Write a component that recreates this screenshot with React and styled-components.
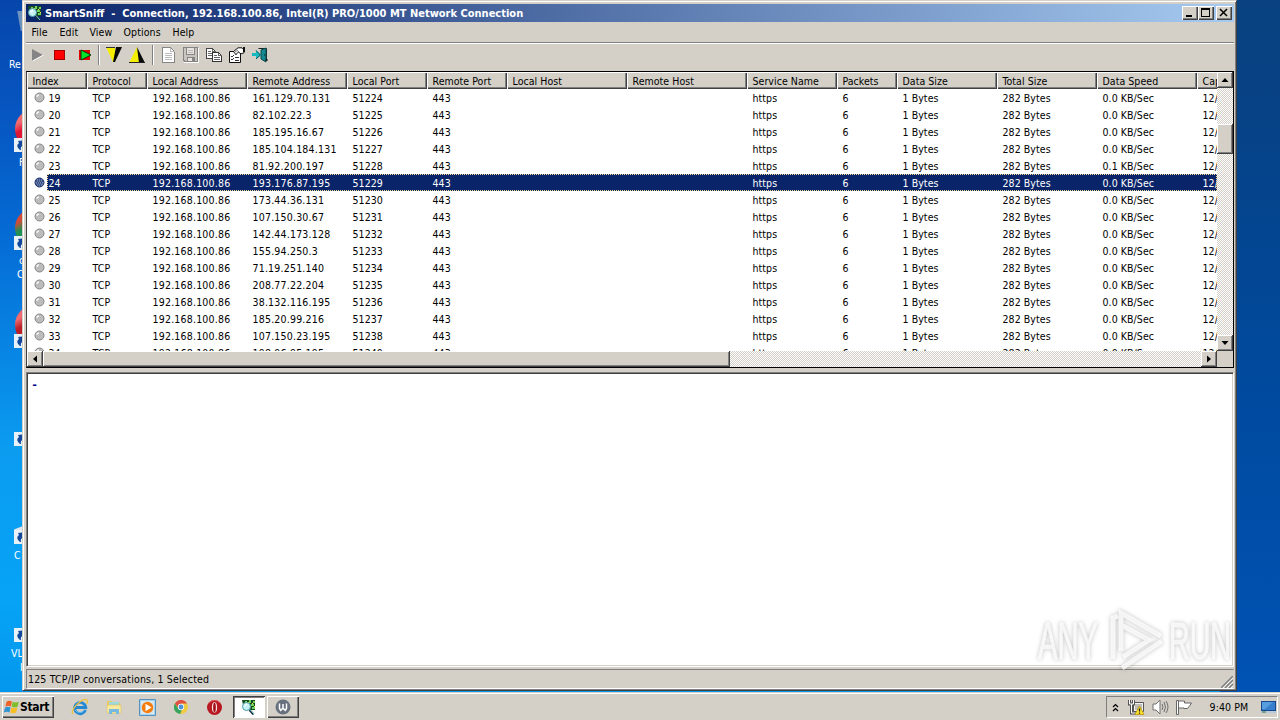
import React from 'react'
import styled, { createGlobalStyle } from 'styled-components'

const columns = [
  { title: 'Index', width: 60 },
  { title: 'Protocol', width: 60 },
  { title: 'Local Address', width: 100 },
  { title: 'Remote Address', width: 100 },
  { title: 'Local Port', width: 80 },
  { title: 'Remote Port', width: 80 },
  { title: 'Local Host', width: 120 },
  { title: 'Remote Host', width: 120 },
  { title: 'Service Name', width: 90 },
  { title: 'Packets', width: 60 },
  { title: 'Data Size', width: 100 },
  { title: 'Total Size', width: 100 },
  { title: 'Data Speed', width: 100 },
  { title: 'Cap', width: 120 },
]

const remotes = [
  '161.129.70.131', '82.102.22.3', '185.195.16.67', '185.104.184.131', '81.92.200.197',
  '193.176.87.195', '173.44.36.131', '107.150.30.67', '142.44.173.128', '155.94.250.3',
  '71.19.251.140', '208.77.22.204', '38.132.116.195', '185.20.99.216', '107.150.23.195',
  '198.96.95.195',
]

const rows = remotes.map((remote, i) => [
  String(19 + i), 'TCP', '192.168.100.86', remote, String(i === 15 ? 51240 : 51224 + i), '443', '', '',
  'https', '6', '1 Bytes', '282 Bytes', i === 4 ? '0.1 KB/Sec' : '0.0 KB/Sec', '12/',
])

const SniffIcon = () => (
  <svg width="16" height="16" viewBox="0 0 16 16">
    <path d="M1 1h13v10H9l-3-2-4-3z" fill="#174b22" />
    <path d="M4 2h2v2H4zM8 1h2v3H8zM12 2h2v2h-2zM10 5h3v2h-3zM11 8h3v2h-3z" fill="#6fd35e" />
    <path d="M7 3h1v1H7zM11 4h1v1h-1zM13 7h1v1h-1z" fill="#ffe74a" />
    <circle cx="5.5" cy="7.5" r="4" fill="#c6f3f7" stroke="#4a9da5" />
    <path d="M3.5 7 6 5" stroke="#fff" strokeWidth="1.3" />
    <path d="m8.5 11 4 4.5" stroke="#102c38" strokeWidth="2" />
    <path d="m9 10.5 4 4.5" stroke="#8be1e8" strokeWidth=".9" />
  </svg>
)

const PlayIcon = () => (
  <svg width="16" height="16"><path d="M3 2v12l11-6z" fill="#858585" /><path d="m3.5 14 11-6" stroke="#fff" /></svg>
)

const StopIcon = () => (
  <svg width="16" height="16" shapeRendering="crispEdges">
    <path d="M2 3h11v10H2z" fill="#a00000" /><path d="M3 4h9v8H3z" fill="#f00" />
  </svg>
)

const RestartIcon = () => (
  <svg width="16" height="16">
    <path d="M4 3h11v10H4z" fill="#e00000" />
    <path d="M6 3v10l10-5z" fill="#00e52a" stroke="#063a08" />
  </svg>
)

const DownFilterIcon = () => (
  <svg width="16" height="16">
    <path d="M0 0h9v15H7z" fill="#f6ee00" /><path d="M16 0h-6l-3 15h2z" fill="#080808" />
    <path d="M0 .5h9" stroke="#333" />
  </svg>
)

const UpFilterIcon = () => (
  <svg width="16" height="16">
    <path d="M8 0 0 16h11z" fill="#f6ee00" /><path d="M8 0l2 16h6z" fill="#080808" />
    <path d="M0 15.5h16" stroke="#222" />
  </svg>
)

const DocIcon = () => (
  <svg width="16" height="16" fill="none" shapeRendering="crispEdges">
    <path d="M2.5.5h8l4 4v11h-12z" fill="#fff" stroke="#858585" />
    <path d="M10.5.5v4h4M5 6.5h7M5 8.5h7M5 10.5h7M5 12.5h7" stroke="#bbb" />
  </svg>
)

const SaveIcon = () => (
  <svg width="16" height="16" fill="none" shapeRendering="crispEdges">
    <path d="M.5.5h14v14H2L.5 13z" fill="#c8c5be" stroke="#828282" />
    <path d="M3.5.5h8v7h-8zM4.5 10.5h7v4h-7z" fill="#e7e4df" stroke="#858585" />
    <path d="M5 3.5h5M5 5.5h5" stroke="#bbb" /><path d="M9 11h2v3H9z" fill="#888" />
    <path d="M1 15.5h14.5V1" stroke="#fff" />
  </svg>
)

const CopyIcon = () => (
  <svg width="16" height="16" fill="none" shapeRendering="crispEdges">
    <path d="M.5 1.5h6l3 3v7h-9z" fill="#fff" stroke="#444" />
    <path d="M6.5 1.5v3h3M2 4.5h3M2 6.5h5M2 8.5h5" stroke="#666" />
    <path d="M6.5 5.5h6l3 3v6h-9z" fill="#fff" stroke="#333" />
    <path d="M12.5 5.5v3h3M8 8.5h3M8 10.5h6M8 12.5h6" stroke="#666" />
  </svg>
)

const PropertiesIcon = () => (
  <svg width="16" height="16" fill="none">
    <path d="M.5 4.5h11v11H.5z" fill="#fff" stroke="#111" />
    <path d="m2 9 1 1 2-2M2 12l1 1 2-2M6 10.5h4M6 13.5h4" stroke="#333" />
    <path d="M4.5 4.5 9 .8h4l2 2v3l-3 1-3-2-2 3z" fill="#fff" stroke="#111" />
    <path d="m6 5 3-2M8 6l2-2" stroke="#777" /><path d="M14 0h2v5h-2z" fill="#111" />
  </svg>
)

const ExitIcon = () => (
  <svg width="16" height="16">
    <path d="M6.5 1.5h8v12" fill="none" stroke="#222" />
    <path d="m9 3 5-2v14l-5-3z" fill="#168a91" stroke="#07484c" />
    <path d="M0 6h4V3l5 5-5 4V9H0z" fill="#16b9bd" />
    <path d="M4 3.5 8.5 8 4 12" fill="none" stroke="#075a60" />
    <path d="M13 13h3M12 8h1" stroke="#111" />
  </svg>
)

const Bullet = ({ selected }) => (
  <svg width="11" height="11" viewBox="0 0 11 11">
    <circle cx="5.5" cy="5.5" r="4.5" fill={selected ? '#697ca5' : '#bcbcbc'} stroke={selected ? '#142e6c' : '#858585'} />
    {selected
      ? <path d="M2 4h1m1 0h1m1 0h1m1 0h1M3 6h1m1 0h1m1 0h1M2 8h1m1 0h1m1 0h1M4 2h1m1 0h1" stroke="#0a246a" />
      : <path d="M3 5q0-2 2-2" fill="none" stroke="#f5f5f5" strokeWidth="1.3" />}
  </svg>
)

const Arrow = ({ turn = 0 }) => (
  <svg width="8" height="8" viewBox="0 0 8 8">
    <path d="M4 2 7.5 6h-7z" transform={`rotate(${turn} 4 4)`} />
  </svg>
)

const FlagLogo = () => (
  <svg width="16" height="16" viewBox="0 0 16 16">
    <path d="M2.6 2.8Q5 .8 8 2.5L6.8 7.4Q4 6 1.3 7.7z" fill="#ef6025" />
    <path d="M8.8 2.8q3 1.5 6-.1l-1.2 5q-3 1.6-6-.1z" fill="#7fbd2b" />
    <path d="M1.1 8.6q2.7-1.7 5.5-.2l-1.2 5q-3-1.4-5.6.2z" fill="#3295d3" />
    <path d="M7.4 8.5q3 1.5 6 .1l-1.2 5q-3 1.5-6-.1z" fill="#f7bd24" />
  </svg>
)

const IeIcon = () => (
  <svg width="18" height="18" viewBox="0 0 18 18" fill="none">
    <path d="M14.5 12A5.6 5.6 0 1 1 14.8 9.5H5" stroke="#2788d2" strokeWidth="2.8" />
    <path d="M13.5 12A5.8 5.8 0 0 1 4 12" stroke="#62c2f1" />
    <path d="M2 16C-2 13 12-2 16 2c1 1 .4 2.5-.3 3.8" stroke="#edc13a" strokeWidth="1.3" />
  </svg>
)

const FolderIcon = () => (
  <svg width="18" height="18" viewBox="0 0 18 18">
    <path d="M2 3h5l1 2h7v10H2z" fill="#e8c85f" /><path d="M4 4h10v5H4z" fill="#9dd8db" />
    <path d="M2 7h14v8H2z" fill="#fae99c" stroke="#d8bf61" strokeWidth=".6" />
    <path d="M4 16v-5h10v5h-3v-2H7v2z" fill="#77b9df" />
  </svg>
)

const MediaIcon = () => (
  <svg width="17" height="17" viewBox="0 0 17 17">
    <path d="M.5.5h16v16H.5z" fill="#a9d2ec" stroke="#5292c3" />
    <path d="M2 2h13v13H2z" fill="#d7e8ef" />
    <circle cx="8.5" cy="8.5" r="5.8" fill="#f47d12" /><path d="M6.5 4.8v7.4l6-3.7z" fill="#fff" />
  </svg>
)

const ChromeIcon = () => (
  <svg width="14" height="14" viewBox="0 0 16 16">
    <circle cx="8" cy="8" r="8" fill="#efcb42" />
    <path d="M1 4a8 8 0 0 1 14 0H8L5 9z" fill="#df4f44" />
    <path d="m1 4 4 6 4 1-2 5A8 8 0 0 1 1 4z" fill="#36a35e" />
    <circle cx="8" cy="8" r="3.6" fill="#fff" /><circle cx="8" cy="8" r="2.8" fill="#4b91db" />
  </svg>
)

const OperaIcon = () => (
  <svg width="15" height="15" viewBox="0 0 16 16">
    <circle cx="8" cy="8" r="8" fill="#b71822" /><path d="M2 3q6-5 12 0" stroke="#e96061" fill="none" />
    <ellipse cx="8" cy="8" rx="2.8" ry="5.5" fill="#f6dddd" />
    <ellipse cx="8" cy="8" rx="1.4" ry="5.2" fill="#a00e18" />
  </svg>
)

const RoundAppIcon = () => (
  <svg width="16" height="16" viewBox="0 0 16 16">
    <circle cx="8" cy="8" r="7.5" fill="#68717d" />
    <path d="M4.5 4.5v5l1.2 1.8L8 9.2l2.3 2.1 1.2-1.8v-5M8 5v4" fill="none" stroke="#fff" strokeWidth="1.5" />
  </svg>
)

const NetworkIcon = () => (
  <svg width="17" height="17" viewBox="0 0 17 17">
    <path d="M5.5 3.5h10v9h-10z" fill="#f4f3ef" stroke="#555" />
    <path d="M7 5h7v6H7z" fill="#c0bdb6" />
    <path d="M1.5 1v4h4V1M3.5 5v9H8" fill="none" stroke="#555" strokeWidth="3" />
    <path d="M1.5 1v4h4V1M3.5 5v9H8" fill="none" stroke="#fff" />
    <path d="m11.5 7 4.5 8.5H7z" fill="#ffe329" stroke="#b18b00" strokeWidth=".7" />
    <path d="M11.5 9.5v3m0 1v1.2" stroke="#222" strokeWidth="1.3" />
  </svg>
)

const SoundIcon = () => (
  <svg width="17" height="16" viewBox="0 0 17 16" fill="none" stroke="#707070">
    <path d="M1 5h3l4-4v14l-4-4H1z" fill="#fff" />
    <path d="M10 5q2 3 0 6m2-8q3 5 0 10m2-11q4 6 0 12" />
  </svg>
)

const ActionIcon = () => (
  <svg width="16" height="16" fill="none" stroke="#666">
    <path d="M.5 1.5h2v14h-2z" fill="#fff" /><path d="M2.5 2h6v2h7l-2 3-2 2.5H8V9H2.5z" fill="#fff" />
  </svg>
)

const DesktopIcon = () => (
  <svg width="15" height="14">
    <path d="M0 1h15v10H0z" fill="#17488e" /><path d="M1 2h13v8H1z" fill="#357fcd" />
    <path d="M1 2h11L4 9H1z" fill="#579ddd" /><path d="M0 11h15v2H0z" fill="#b9c9dc" /><path d="M1 12h4" stroke="#3b7f42" />
  </svg>
)

const ShortcutArrow = () => (
  <svg width="12" height="14" viewBox="0 0 12 14">
    <path d="M0 0h12v14H0z" fill="#e8f0f8" />
    <path d="M6 12Q1 8 5 5L4 3l8-1v8L9.500 8Q6 8 7 12z" fill="#12489c" />
  </svg>
)

const Watermark = () => (
  <WatermarkSvg width="206" height="76" viewBox="0 0 206 76">
    <g opacity=".8">
      <text x="8" y="56" textLength="60" lengthAdjust="spacingAndGlyphs">ANY</text>
      <text x="139" y="56" textLength="62" lengthAdjust="spacingAndGlyphs">RUN</text>
      <path d="M83 56V15l5-2M91 48V10l40 23M132 38 92 65M91 48V18M91 22l28 15-26 17" fill="none" stroke="#fff" strokeWidth="5" />
    </g>
  </WatermarkSvg>
)

const toolbar = [
  [PlayIcon, StopIcon, RestartIcon],
  [DownFilterIcon, UpFilterIcon],
  [DocIcon, SaveIcon, CopyIcon, PropertiesIcon, ExitIcon],
]

function App() {
  return (
    <Desktop>
      <GlobalStyle />
      <Shortcut $top={8}><BinEdge /><Label $top={50} $left={9}>Re</Label></Shortcut>
      <Shortcut $top={105}><Ball $color="#df1735" $top={4} /><Badge><ShortcutArrow /></Badge><Label $top={51} $left={19}>F</Label></Shortcut>
      <Shortcut $top={203}><Ball $color="#238f53" $cap="#d34a36" $top={5} /><Badge><ShortcutArrow /></Badge><Label $top={51} $left={19}>c</Label><Label $top={65} $left={17}>C</Label></Shortcut>
      <Shortcut $top={301}><Ball $color="#bc2029" $top={4} /><Badge><ShortcutArrow /></Badge></Shortcut>
      <Shortcut $top={399}><Badge><ShortcutArrow /></Badge></Shortcut>
      <Shortcut $top={497}><Cone /><Badge><ShortcutArrow /></Badge><Label $top={52} $left={14}>C</Label></Shortcut>
      <Shortcut $top={595}><Badge><ShortcutArrow /></Badge><Label $top={52} $left={11}>VL</Label><Label $top={66} $left={20}>I</Label></Shortcut>

      <Window>
        <TitleBar>
          <SniffIcon />
          <Title>SmartSniff&nbsp; -&nbsp; Connection, 192.168.100.86, Intel(R) PRO/1000 MT Network Connection</Title>
          <Controls>
            <Control><svg width="16" height="14"><path d="M4 9h6v2H4z" /></svg></Control>
            <Control><svg width="16" height="14"><path d="M3 2h9v9H3zm1 2v6h7V4z" fillRule="evenodd" /></svg></Control>
            <Control $gap><svg width="16" height="14"><path d="m4 3 7 7M11 3l-7 7" stroke="#000" strokeWidth="1.5" /></svg></Control>
          </Controls>
        </TitleBar>
        <MenuBar>
          <MenuItem $width={28}>File</MenuItem>
          <MenuItem $width={30}>Edit</MenuItem>
          <MenuItem $width={34}>View</MenuItem>
          <MenuItem $width={49}>Options</MenuItem>
          <MenuItem $width={34}>Help</MenuItem>
        </MenuBar>
        <ToolBar>
          {toolbar.map((group, i) => (
            <ToolGroup key={i}>
              {group.map((Icon, j) => <ToolButton key={j}><Icon /></ToolButton>)}
            </ToolGroup>
          ))}
        </ToolBar>

        <ListView>
          <ListTop>
            <Table>
              <HeaderRow>
                {columns.map(c => <HeaderCell key={c.title} $width={c.width}>{c.title}</HeaderCell>)}
              </HeaderRow>
              {rows.map((row, i) => (
                <Row key={row[0]}>
                  <BulletCell><Bullet selected={i === 5} /></BulletCell>
                  <RowBody $selected={i === 5}>
                    {row.map((text, j) => (
                      <Cell key={j} $width={j === 0 ? 40 : columns[j].width} $first={j === 0} $address={j === 2 || j === 3}>{text}</Cell>
                    ))}
                  </RowBody>
                </Row>
              ))}
            </Table>
            <VScroll>
              <ScrollButton><Arrow /></ScrollButton>
              <VThumb />
              <ScrollButton><Arrow turn={180} /></ScrollButton>
            </VScroll>
          </ListTop>
          <HScroll>
            <ScrollButton><Arrow turn={-90} /></ScrollButton>
            <HThumb />
            <Track />
            <ScrollButton><Arrow turn={90} /></ScrollButton>
            <Corner />
          </HScroll>
        </ListView>

        <DataPane>-</DataPane>
        <StatusBar>
          <span>125 TCP/IP conversations, 1 Selected</span>
          <svg width="12" height="12" stroke="#808080" fill="none"><path d="M0 12 12 0M4 12l8-8M8 12l4-4" strokeWidth="1.5" /><path d="M2 12 12 2M6 12l6-6M10 12l2-2" stroke="#fff" strokeWidth=".8" /></svg>
        </StatusBar>
      </Window>
      <Watermark />

      <TaskBar>
        <StartButton><FlagLogo /><span>Start</span></StartButton>
        <QuickLaunch>
          <Launcher><IeIcon /></Launcher>
          <Launcher><FolderIcon /></Launcher>
          <Launcher><MediaIcon /></Launcher>
          <Launcher><ChromeIcon /></Launcher>
          <Launcher><OperaIcon /></Launcher>
        </QuickLaunch>
        <TaskButton $active><SniffIcon /></TaskButton>
        <TaskButton><RoundAppIcon /></TaskButton>
        <Tray>
          <svg width="7" height="9" fill="none" stroke="#000" strokeWidth="1.2"><path d="m1 4 2.500-2.500L6 4M1 8l2.500-2.500L6 8" /></svg>
          <TrayIcons><NetworkIcon /><SoundIcon /><ActionIcon /></TrayIcons>
          <Clock>9:40 PM</Clock>
          <DesktopIcon />
        </Tray>
      </TaskBar>
    </Desktop>
  )
}

export default App

const GlobalStyle = createGlobalStyle`
  * { box-sizing: border-box; }
  body {
    margin: 0;
    overflow: hidden;
    font: 10.5px "DejaVu Sans Condensed", "DejaVu Sans", sans-serif;
    font-stretch: condensed;
    color: #000;
  }
  svg { display: block; flex: none; }
`

// Desktop

const Desktop = styled.div`
  position: relative;
  width: 1280px;
  height: 720px;
  overflow: hidden;
  display: flex;
  flex-direction: column;
  justify-content: flex-end;
  background:
    linear-gradient(180deg, #0a4280 0, #064287 130px, #004a9e 380px, #0052b4 690px) right / 60px 100% no-repeat,
    linear-gradient(180deg, #0646ab 0, #0754bf 100px, #056ad4 230px, #0785e4 350px, #0b9cf0 450px, #06a3f6 600px, #0397ed 690px);
`
const Shortcut = styled.div`
  position: absolute;
  left: 0;
  top: ${props => props.$top}px;
  width: 48px;
  height: 80px;
`
const Badge = styled.div`
  position: absolute;
  left: 14px;
  top: 33px;
`
const Label = styled.span`
  position: absolute;
  left: ${props => props.$left}px;
  top: ${props => props.$top}px;
  color: #fff;
  line-height: 13px;
`
const Ball = styled.div`
  position: absolute;
  left: 15px;
  top: ${props => props.$top}px;
  width: 40px;
  height: 40px;
  border-radius: 50%;
  background: linear-gradient(150deg, ${props => props.$cap || '#f06a70'} 25%, ${props => props.$color} 40%);
`
const Cone = styled.div`
  position: absolute;
  left: 14px;
  top: 27px;
  width: 14px;
  height: 7px;
  background: #dfe8f0;
  clip-path: polygon(0 80%, 100% 0, 100% 100%, 0 100%);
`
const BinEdge = styled.div`
  position: absolute;
  left: 19px;
  top: 3px;
  width: 8px;
  height: 20px;
  background: #6f93bf;
  transform: skewX(10deg);
`

// Window

const Window = styled.div`
  position: absolute;
  left: 22px;
  top: 0;
  width: 1215px;
  height: 691px;
  padding: 3px 2px 1px 3px;
  display: flex;
  flex-direction: column;
  background: #d4d0c8;
  border: 1px solid #d4d0c8;
  border-right-color: #404040;
  border-bottom-color: #404040;
  box-shadow: inset 1px 1px #fff, inset -1px -1px #808080;
`
const TitleBar = styled.div`
  height: 18px;
  padding: 0 2px 0 1px;
  display: flex;
  align-items: center;
  background: linear-gradient(90deg, #0a246a, #a6caf0);
`
const Title = styled.div`
  flex: 1;
  padding-left: 2px;
  color: #fff;
  font-size: 11px;
  font-weight: bold;
  white-space: pre;
`
const Controls = styled.div`
  display: flex;
`
const Control = styled.div`
  width: 16px;
  height: 14px;
  margin-left: ${props => (props.$gap ? 2 : 0)}px;
  background: #d4d0c8;
  box-shadow: inset 1px 1px #fff, inset -1px -1px #404040, inset -2px -2px #808080;
`
const MenuBar = styled.div`
  height: 22px;
  padding: 0 5px 1px;
  display: flex;
  align-items: center;
  border-bottom: 1px solid #fff;
  box-shadow: inset 0 -1px #808080;
`
const MenuItem = styled.div`
  width: ${props => props.$width}px;
  padding-left: 0.5px;
  letter-spacing: 0.1px;
  white-space: nowrap;
`
const ToolBar = styled.div`
  height: 27px;
  display: flex;
  align-items: center;
  padding-bottom: 5px;
`
const ToolGroup = styled.div`
  display: flex;
  height: 20px;
  align-items: center;
  & + & {
    margin-left: 3px;
    padding-left: 4px;
    border-left: 1px solid #808080;
    box-shadow: inset 1px 0 #fff;
  }
`
const ToolButton = styled.div`
  width: 23px;
  padding-left: 3px;
`

// Conversation list

const ListView = styled.div`
  height: 297px;
  border: 1px solid #000;
  border-left-color: #404040;
`
const ListTop = styled.div`
  display: flex;
  height: 279px;
`
const Table = styled.div`
  flex: 1;
  min-width: 0;
  overflow: hidden;
  background: #fff;
`
const HeaderRow = styled.div`
  display: flex;
  height: 17px;
  width: 1300px;
`
const HeaderCell = styled.div`
  width: ${props => props.$width}px;
  height: 17px;
  padding-left: 5.5px;
  line-height: 18px;
  letter-spacing: 0.05px;
  white-space: nowrap;
  background: #d4d0c8;
  box-shadow: inset 1px 1px #fff, inset -1px -1px #404040, inset -2px -2px #808080;
`
const Row = styled.div`
  display: flex;
  width: 1190px;
  height: 17px;
`
const BulletCell = styled.div`
  width: 20px;
  padding: 3px 0 0 7px;
`
const RowBody = styled.div`
  display: flex;
  flex: 1;
  min-width: 0;
  overflow: hidden;
  line-height: 18px;
  color: ${props => (props.$selected ? '#fff' : '#000')};
  background: ${props => (props.$selected ? '#0a246a' : 'transparent')};
  outline: ${props => (props.$selected ? '1px dotted #f5db95' : 'none')};
  outline-offset: -1px;
`
const Cell = styled.div`
  flex: none;
  width: ${props => props.$width}px;
  padding-left: ${props => (props.$first ? 1.5 : 5.5)}px;
  letter-spacing: ${props => (props.$address ? 0.2 : 0.07)}px;
  white-space: nowrap;
`

// Scroll bars

const Track = styled.div`
  flex: 1;
  background: repeating-conic-gradient(#fff 0 25%, #d4d0c8 0 50%) 0 0 / 2px 2px;
`
const VScroll = styled.div`
  width: 16px;
  display: flex;
  flex-direction: column;
  justify-content: space-between;
  background: repeating-conic-gradient(#fff 0 25%, #d4d0c8 0 50%) 0 0 / 2px 2px;
`
const ScrollButton = styled.div`
  flex: none;
  width: 16px;
  height: 16px;
  display: flex;
  align-items: center;
  justify-content: center;
  background: #d4d0c8;
  box-shadow: inset -1px -1px #404040, inset 1px 1px #fff, inset -2px -2px #808080;
`
const VThumb = styled(ScrollButton)`
  height: 30px;
  margin: 36px 0 auto;
`
const HScroll = styled.div`
  display: flex;
  height: 16px;
`
const HThumb = styled(ScrollButton)`
  width: 687px;
`
const Corner = styled.div`
  width: 16px;
  background: #d4d0c8;
`

const DataPane = styled.div`
  height: 295px;
  margin-top: 4px;
  padding: 6px 4px;
  background: #fff;
  border: 1px solid #808080;
  border-right-color: #fff;
  border-bottom-color: #fff;
  box-shadow: inset 1px 1px #404040, inset -1px -1px #d4d0c8;
  font: bold 12px "Liberation Mono", monospace;
  color: #00008b;
`
const StatusBar = styled.div`
  height: 20px;
  margin-top: 2px;
  padding-left: 1px;
  display: flex;
  justify-content: space-between;
  align-items: center;
  letter-spacing: 0.17px;
  border: 1px solid #808080;
  border-right-color: #d4d0c8;
  border-bottom-color: #fff;
  svg { align-self: flex-end; }
`
const WatermarkSvg = styled.svg`
  position: absolute;
  left: 1030px;
  top: 603px;
  filter: drop-shadow(0 0 2px rgba(60, 60, 60, 0.4));
  text {
    font: 51px "Liberation Sans", sans-serif;
    fill: #fff;
    stroke: #fff;
  }
`

// Task bar

const TaskBar = styled.div`
  height: 28px;
  padding: 4px 2px 2px;
  display: flex;
  align-items: center;
  background: #d4d0c8;
  box-shadow: inset 0 1px #d4d0c8, inset 0 2px #fff;
`
const StartButton = styled.div`
  width: 52px;
  height: 22px;
  padding-left: 2px;
  display: flex;
  align-items: center;
  font-size: 12px;
  font-weight: bold;
  letter-spacing: -0.35px;
  box-shadow: inset 1px 1px #fff, inset -1px -1px #404040, inset -2px -2px #808080;
`
const QuickLaunch = styled.div`
  display: flex;
  align-items: center;
  margin: 0 2px 0 9px;
`
const Launcher = styled.div`
  width: 33.7px;
  display: flex;
  justify-content: center;
`
const TaskButton = styled.div`
  width: 32px;
  height: 22px;
  margin-right: 2px;
  display: flex;
  align-items: center;
  justify-content: center;
  background: ${props => (props.$active ? '#fff' : '#d4d0c8')};
  box-shadow: ${props => (props.$active
    ? 'inset 1px 1px #404040, inset -1px -1px #fff, inset 2px 2px #808080'
    : 'inset 1px 1px #fff, inset -1px -1px #404040, inset -2px -2px #808080')};
`
const Tray = styled.div`
  width: 172px;
  height: 22px;
  margin-left: auto;
  padding: 0 1px 0 5px;
  display: flex;
  align-items: center;
  border: 1px solid #808080;
  border-right-color: #fff;
  border-bottom-color: #fff;
`
const TrayIcons = styled.div`
  display: flex;
  gap: 7px;
  margin-left: 9px;
`
const Clock = styled.div`
  flex: 1;
  padding-left: 5px;
  text-align: center;
  letter-spacing: 0.1px;
  white-space: nowrap;
`
